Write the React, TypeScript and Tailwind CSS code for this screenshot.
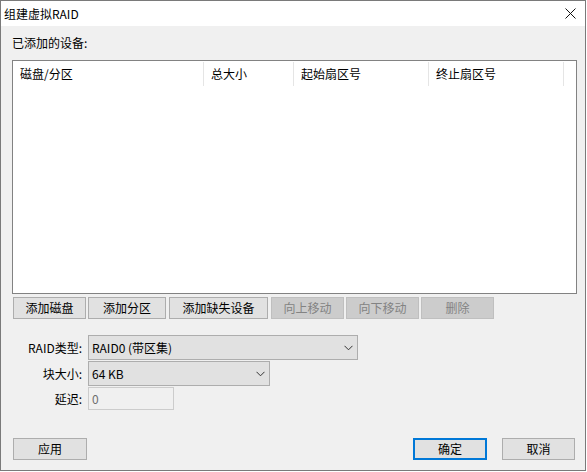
import React from 'react';

const font = { fontFamily: '"Microsoft YaHei UI", "Noto Sans CJK SC", "Noto Sans", sans-serif' };

function Chevron() {
  return (
    <svg width="9" height="6" viewBox="0 0 9 6" className="shrink-0">
      <path d="M0.5 0.8 L4.5 4.8 L8.5 0.8" fill="none" stroke="#333" strokeWidth="1" />
    </svg>
  );
}

function Btn({ label, w, ml, disabled }: { label: string; w: string; ml: string; disabled?: boolean }) {
  return (
    <button
      className={`${w} ${ml} h-[22px] border text-[12px] leading-none ${
        disabled ? 'bg-[#cccccc] border-[#bfbfbf] text-[#838383]' : 'bg-[#e1e1e1] border-[#adadad] text-black'
      }`}
    >
      {label}
    </button>
  );
}

export default function App() {
  const cols = [
    { name: '磁盘/分区', w: 'w-[191px]' },
    { name: '总大小', w: 'w-[90px]' },
    { name: '起始扇区号', w: 'w-[135px]' },
    { name: '终止扇区号', w: 'w-[135px]' },
  ];

  return (
    <div style={font} className="w-[586px] h-[471px] border border-[#7a7a7a] bg-[#f0f0f0] flex flex-col text-[12px] text-black select-none">
      {/* title bar */}
      <div className="h-[25px] bg-white flex items-center justify-between pl-[3px] pr-[9px] shrink-0">
        <span className="text-[12px] leading-none">组建虚拟RAID</span>
        <svg width="11" height="11" viewBox="0 0 11 11">
          <path d="M0.5 0.5 L10.5 10.5 M10.5 0.5 L0.5 10.5" stroke="#111" strokeWidth="1" />
        </svg>
      </div>

      <div className="flex flex-col pl-[11px] flex-1">
        <div className="mt-[9px] h-[16px] leading-[16px]">已添加的设备:</div>

        {/* device list */}
        <div className="mt-[9px] w-[565px] h-[234px] bg-white border border-[#828282]">
          <div className="flex mt-[1px] h-[25px]">
            {cols.map((c) => (
              <div key={c.name} className={`${c.w} h-[24px] flex items-center pl-[7px] border-r border-[#e5e5e5]`}>
                {c.name}
              </div>
            ))}
          </div>
        </div>

        {/* list buttons */}
        <div className="flex mt-[3px]">
          <Btn label="添加磁盘" w="w-[73px]" ml="ml-[1px]" />
          <Btn label="添加分区" w="w-[78px]" ml="ml-[2px]" />
          <Btn label="添加缺失设备" w="w-[99px]" ml="ml-[3px]" />
          <Btn label="向上移动" w="w-[73px]" ml="ml-[3px]" disabled />
          <Btn label="向下移动" w="w-[73px]" ml="ml-[2px]" disabled />
          <Btn label="删除" w="w-[73px]" ml="ml-[2px]" disabled />
        </div>

        {/* options */}
        <div className="mt-[16px] flex flex-col">
          <div className="flex items-center">
            <div className="w-[71px] text-right pr-[1px]">RAID类型:</div>
            <div className="ml-[5px] w-[270px] h-[25px] bg-[#e1e1e1] border border-[#adadad] flex items-center justify-between pl-[3px] pr-[4px]">
              <span>RAID0 (带区集)</span>
              <Chevron />
            </div>
          </div>
          <div className="flex items-center mt-[1px]">
            <div className="w-[71px] text-right pr-[1px]">块大小:</div>
            <div className="ml-[5px] w-[182px] h-[25px] bg-[#e1e1e1] border border-[#adadad] flex items-center justify-between pl-[3px] pr-[4px]">
              <span>64 KB</span>
              <Chevron />
            </div>
          </div>
          <div className="flex items-center mt-[1px]">
            <div className="w-[71px] text-right pr-[1px]">延迟:</div>
            <div className="ml-[5px] w-[86px] h-[23px] bg-[#f0f0f0] border border-[#cccccc] flex items-center pl-[3px] text-[#6d6d6d]">
              0
            </div>
          </div>
        </div>

        {/* bottom buttons */}
        <div className="mt-[28px] flex items-center">
          <button className="ml-[1px] w-[74px] h-[22px] bg-[#e1e1e1] border border-[#adadad] text-[12px]">应用</button>
          <button className="ml-[326px] w-[74px] h-[22px] bg-[#e1e1e1] border-2 border-[#0078d7] text-[12px]">确定</button>
          <button className="ml-[15px] w-[73px] h-[22px] bg-[#e1e1e1] border border-[#adadad] text-[12px]">取消</button>
        </div>
      </div>
    </div>
  );
}
